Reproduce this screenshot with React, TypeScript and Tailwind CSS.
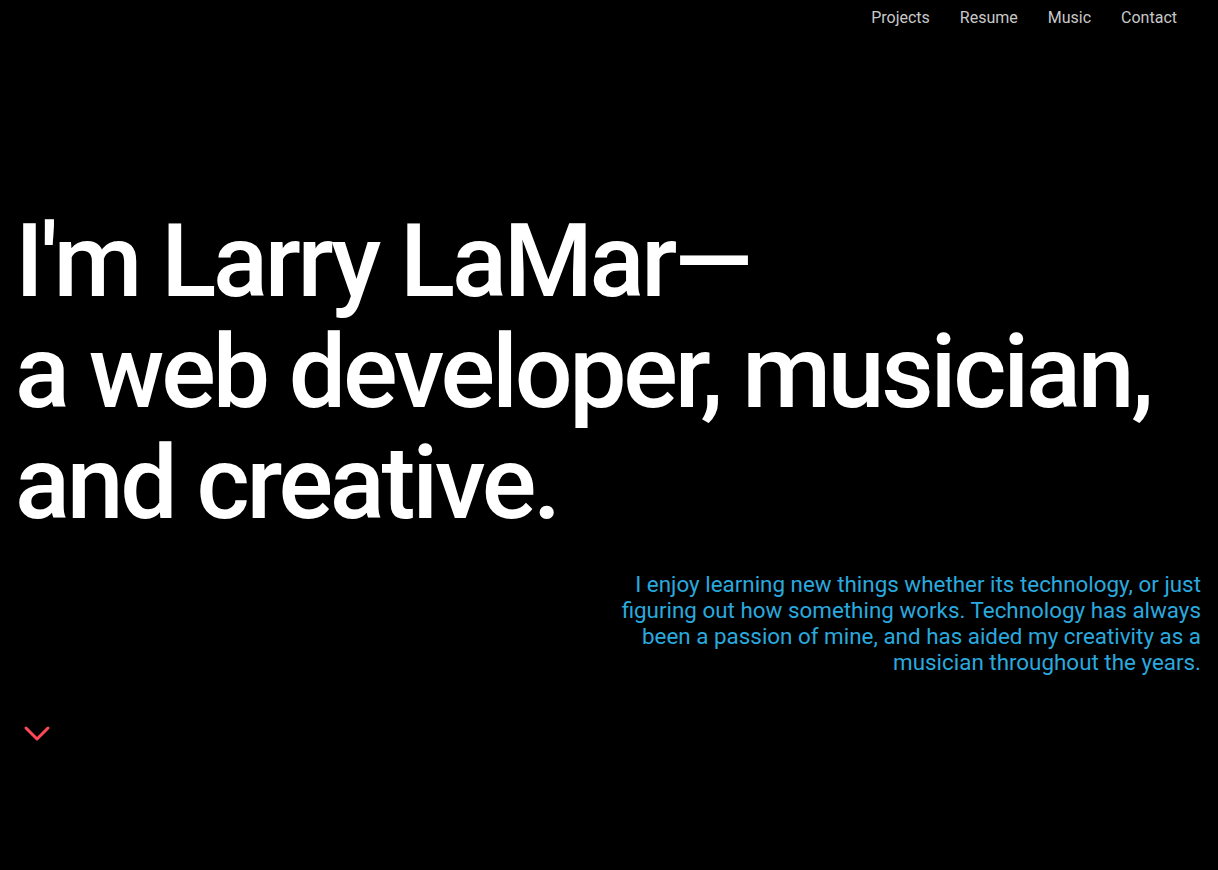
import React from "react";

export default function App() {
  return (
    <div className="min-h-[870px] w-full bg-black text-white" style={{ fontFamily: "Roboto, 'Noto Sans', sans-serif" }}>
      <nav className="flex justify-end gap-[30px] pr-[41px] pt-[7px] text-[16px] leading-[22px] text-[#c8c8c8]">
        <a>Projects</a>
        <a>Resume</a>
        <a>Music</a>
        <a>Contact</a>
      </nav>
      <div className="pl-[15px] pr-[17px] pt-[177px]">
        <h1 className="whitespace-nowrap text-[102px] leading-[111px] font-medium tracking-[-3.25px] text-white">
          I'm Larry LaMar—
          <br />
          a web developer, musician,
          <br />
          and creative.
        </h1>
        <div className="mt-[32px] flex justify-end">
          <p className="w-[605px] text-right text-[22.4px] leading-[26px] text-[#2aa9df]">
            I enjoy learning new things whether its technology, or just figuring out how something works. Technology has always been a passion of mine, and has aided my creativity as a musician throughout the years.
          </p>
        </div>
        <div className="mt-[50px] pl-[8px]">
          <svg width="28" height="18" viewBox="0 0 28 18" fill="none">
            <path d="M3 3 L14 14 L25 3" stroke="#ff4757" strokeWidth="3" strokeLinecap="round" strokeLinejoin="round" />
          </svg>
        </div>
      </div>
    </div>
  );
}
